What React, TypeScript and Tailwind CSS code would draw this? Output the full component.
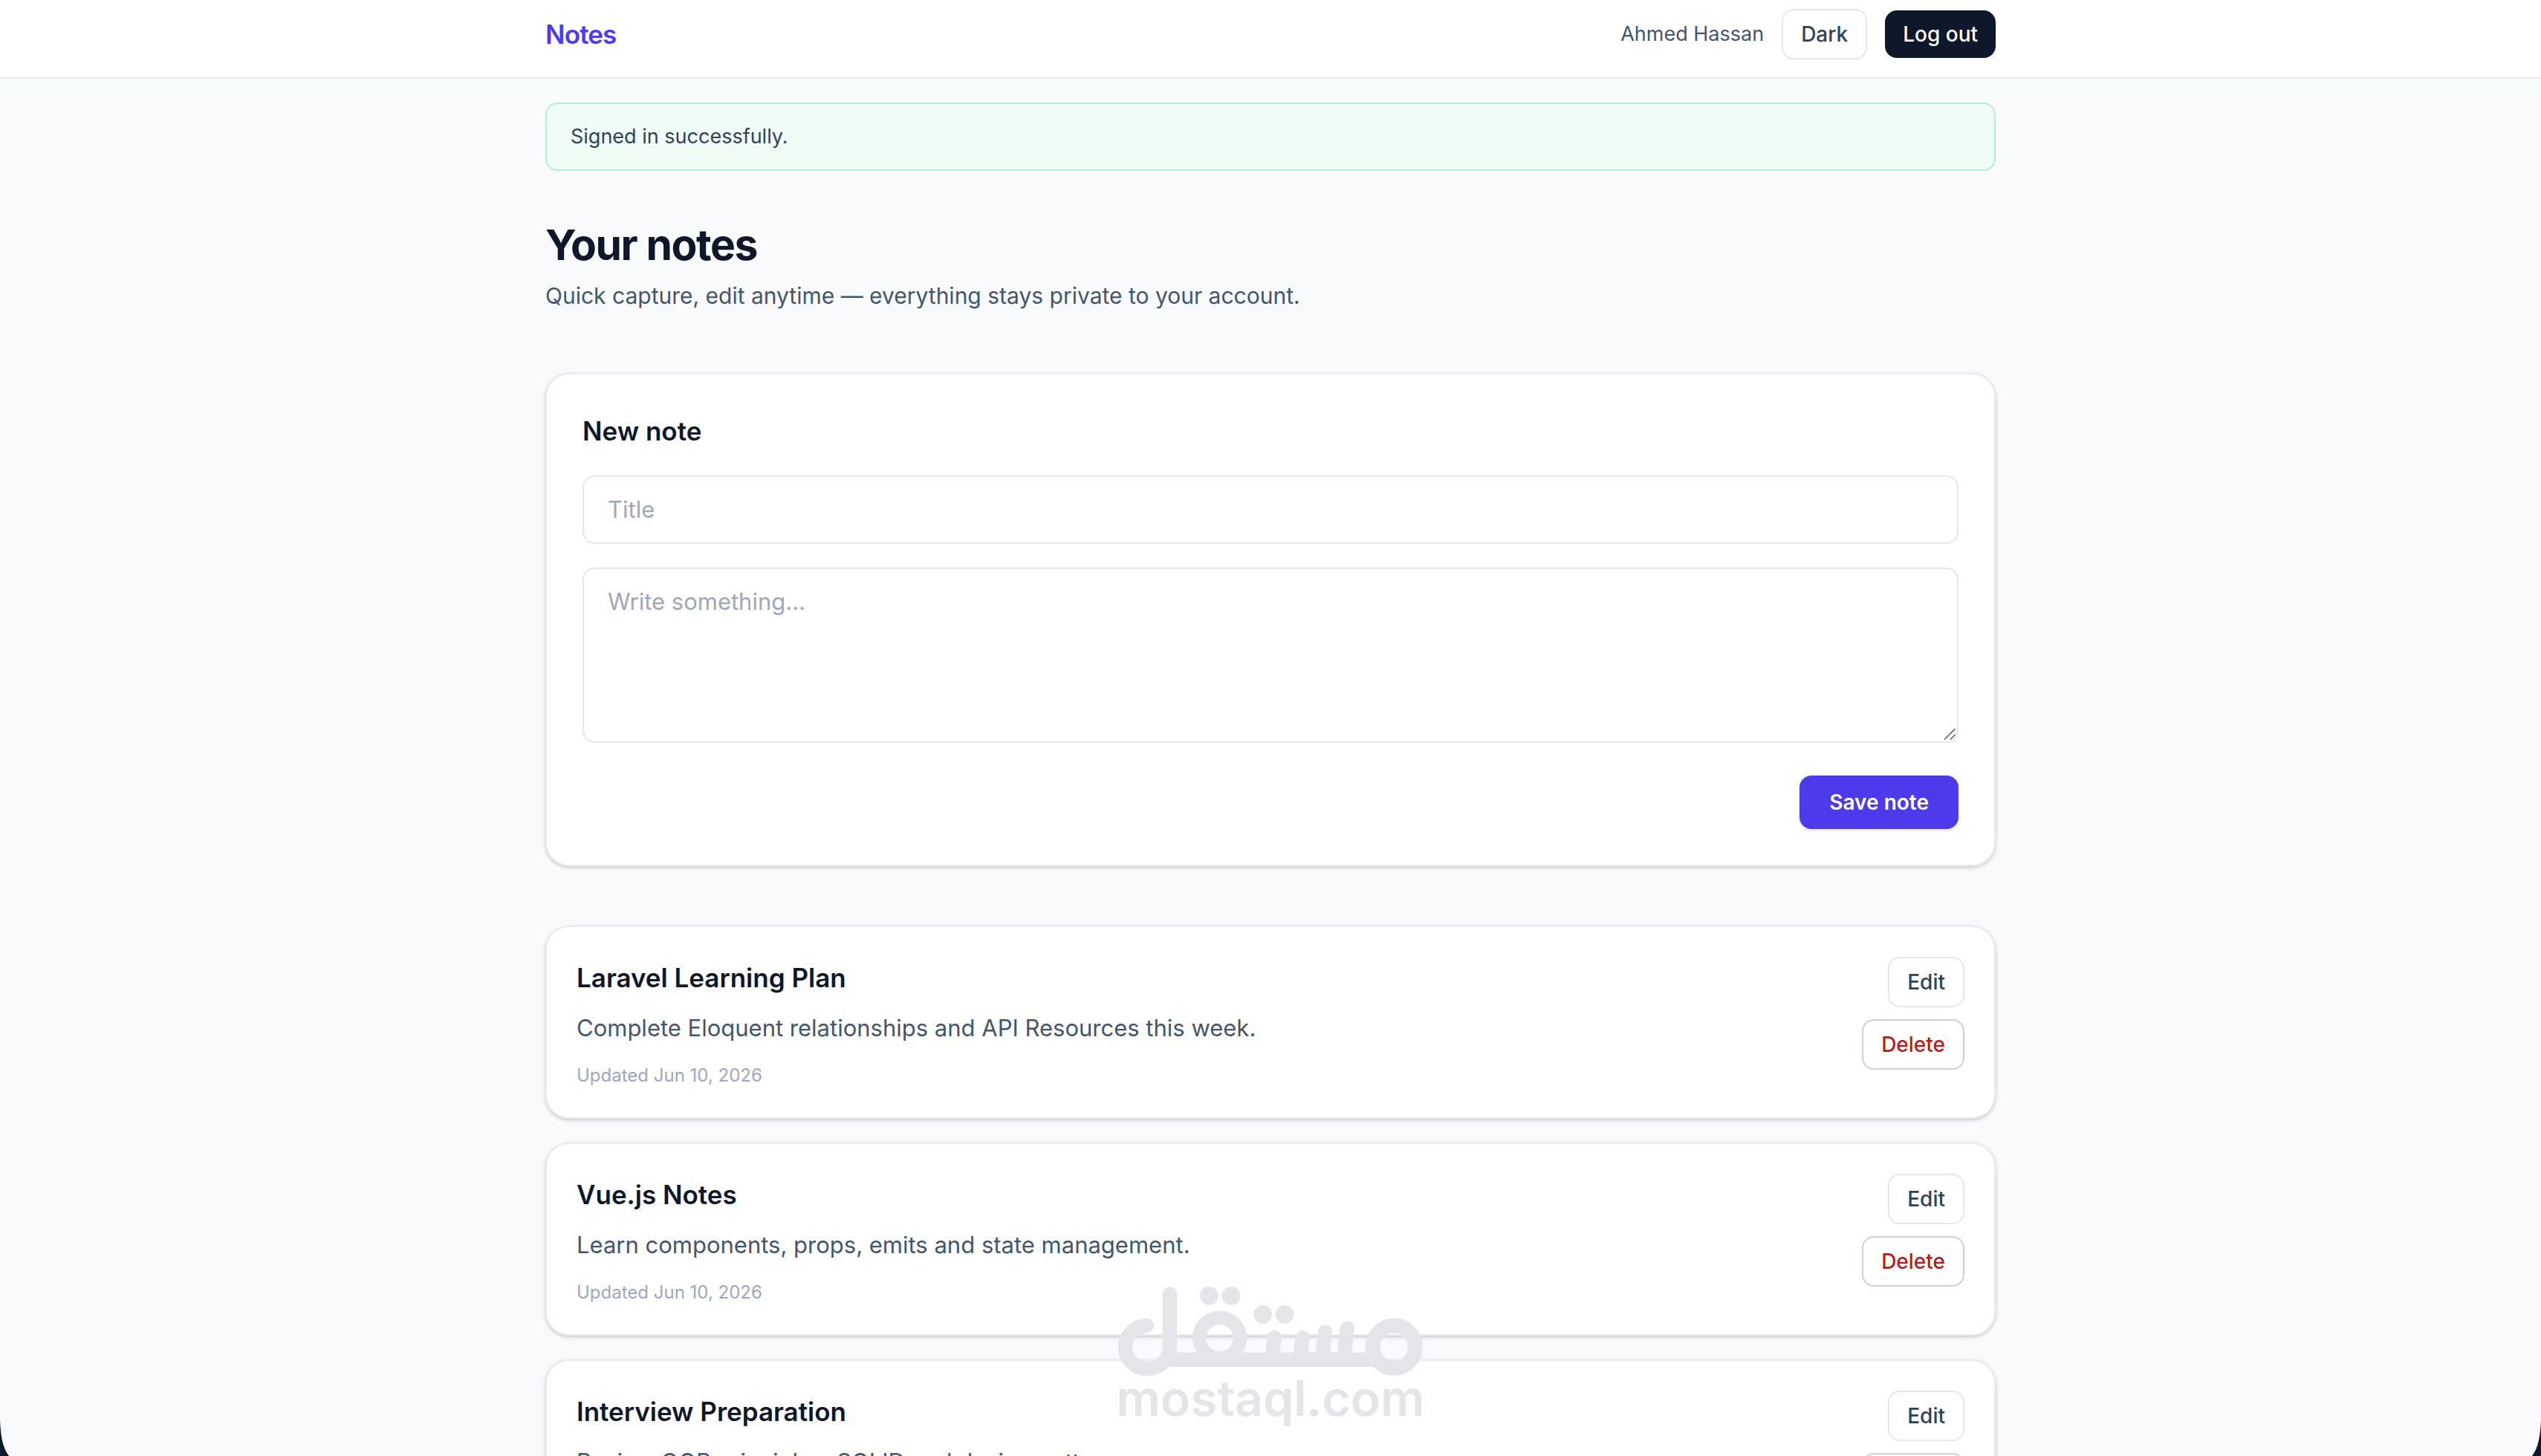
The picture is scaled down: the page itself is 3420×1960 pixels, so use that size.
import { FormEvent, useState } from 'react';

interface Note {
  id: number
  title: string
  body: string
  updated: string
}

const initialNotes: Note[] = [
  {
    id: 1,
    title: 'Laravel Learning Plan',
    body: 'Complete Eloquent relationships and API Resources this week.',
    updated: 'Jun 10, 2026',
  },
  {
    id: 2,
    title: 'Vue.js Notes',
    body: 'Learn components, props, emits and state management.',
    updated: 'Jun 10, 2026',
  },
  {
    id: 3,
    title: 'Interview Preparation',
    body: 'Review OOP principles, SOLID and design patterns.',
    updated: 'Jun 10, 2026',
  },
];

function Header() {
  return (
    <header className="border-b-2 border-[#e8edf2] bg-white pt-3 pb-6">
      <div className="mx-auto flex max-w-[2048px] items-center justify-between px-12">
        <a href="#" className="text-[35px] leading-[56px] font-semibold tracking-tight text-[#4f39f6]">
          Notes
        </a>
        <div className="flex items-center gap-6">
          <span className="text-[27px] leading-10 text-slate-600">Ahmed Hassan</span>
          <button
            type="button"
            className="rounded-2xl border-2 border-[#e4e7ee] px-6 py-3 text-[28px] leading-10 font-medium text-slate-700"
          >
            Dark
          </button>
          <button
            type="button"
            className="rounded-2xl bg-[#0f172a] px-6 py-3 text-[28px] leading-10 font-medium text-white"
          >
            Log out
          </button>
        </div>
      </div>
    </header>
  );
}

function NewNote({ onSave }: { onSave: (title: string, body: string) => void }) {
  const [title, setTitle] = useState('');
  const [body, setBody] = useState('');

  const onSubmit = (e: FormEvent) => {
    e.preventDefault();
    if (!title) return;
    onSave(title, body);
    setTitle('');
    setBody('');
  };

  return (
    <form
      onSubmit={onSubmit}
      className="mt-20 flex flex-col rounded-[32px] border-2 border-[#e8ebf2] bg-white p-12 shadow-[0_2px_6px_rgba(0,0,0,0.1),0_2px_4px_rgba(0,0,0,0.1)]"
    >
      <h2 className="text-[35px] leading-[56px] font-semibold text-[#0f172a]">New note</h2>
      <input
        type="text"
        aria-label="Title"
        value={title}
        onChange={(e) => setTitle(e.target.value)}
        placeholder="Title"
        className="mt-8 w-full rounded-2xl border-2 border-[#e4e7ee] bg-white px-8 py-5 text-[31px] leading-[48px] text-[#0f172a] placeholder:text-[#a0a6bd]"
      />
      <div className="relative mt-8 flex">
        <textarea
          rows={4}
          aria-label="Note"
          value={body}
          onChange={(e) => setBody(e.target.value)}
          placeholder="Write something..."
          className="w-full resize-none rounded-2xl border-2 border-[#e4e7ee] bg-white px-8 py-5 text-[31px] leading-[48px] text-[#0f172a] placeholder:text-[#a0a6bd]"
        />
        <svg
          className="absolute right-1 bottom-1 h-4 w-4"
          viewBox="0 0 16 16"
          fill="none"
          stroke="#5b6472"
          strokeWidth="1.6"
          aria-hidden="true"
        >
          <path d="M1 15.5 15.5 1M9 15.5 15.5 9" />
        </svg>
      </div>
      <button
        type="submit"
        className="mt-11 self-end rounded-2xl bg-[#4c3aeb] px-10 py-4 text-[28px] leading-10 font-semibold text-white shadow-[0_2px_4px_rgba(0,0,0,0.12)]"
      >
        Save note
      </button>
    </form>
  );
}

function NoteCard({ note, onDelete }: { note: Note, onDelete: () => void }) {
  return (
    <li className="flex items-start justify-between rounded-[32px] border-2 border-[#e8ebf2] bg-white p-10 shadow-[0_2px_6px_rgba(0,0,0,0.1),0_2px_4px_rgba(0,0,0,0.1)]">
      <div>
        <h3 className="text-[35px] leading-[56px] font-semibold text-[#0f172a]">{note.title}</h3>
        <p className="mt-4 text-[31px] leading-[48px] text-slate-600">{note.body}</p>
        <p className="mt-6 text-[24px] leading-8 text-[#a0a6bd]">
          Updated
          {' '}
          {note.updated}
        </p>
      </div>
      <div className="flex flex-col items-end gap-4">
        <button
          type="button"
          className="rounded-2xl border-2 border-[#e4e7ee] px-6 py-3 text-[28px] leading-10 font-medium text-slate-700"
        >
          Edit
        </button>
        <button
          type="button"
          onClick={onDelete}
          className="rounded-2xl border-2 border-[#d5ccd5] px-6 py-3 text-[28px] leading-10 font-medium text-[#b91c1c]"
        >
          Delete
        </button>
      </div>
    </li>
  );
}

function Watermark() {
  return (
    <div className="pointer-events-none absolute inset-x-0 bottom-12 flex flex-col items-center text-[#e4e5e9]">
      <svg
        className="h-[120px] w-[410px]"
        viewBox="135 97 1228 359"
        fill="none"
        stroke="currentColor"
        strokeWidth="58"
        strokeLinecap="round"
        aria-hidden="true"
      >
        <path d="M250 254A90 87 0 1 0 343 340V126" />
        <path d="M310 391H1180" strokeLinecap="butt" />
        <circle cx="544" cy="304" r="82" strokeWidth="55" />
        <circle cx="1247" cy="340" r="86" strokeWidth="60" />
        <path d="M765 302 754 391M879 302 868 391M969 280 957 391M1058 266 1044 391" />
        <g fill="currentColor" stroke="none">
          <circle cx="502" cy="134" r="37" />
          <circle cx="590" cy="134" r="37" />
          <circle cx="718" cy="209" r="37" />
          <circle cx="806" cy="209" r="37" />
        </g>
      </svg>
      <span className="text-[66px] leading-[60px] font-semibold">mostaql.com</span>
    </div>
  );
}

function App() {
  const [notes, setNotes] = useState(initialNotes);

  const addNote = (title: string, body: string) => {
    setNotes([{
      id: Date.now(), title, body, updated: 'just now',
    }, ...notes]);
  };

  return (
    <div className="relative h-screen overflow-hidden bg-[#f9fafc] font-['Inter',sans-serif]">
      <Header />
      <main className="mx-auto max-w-[2048px] px-12 pt-8">
        <div
          role="status"
          className="rounded-2xl border-2 border-[#b3f0d2] bg-[#effdf6] px-8 py-6 text-[27px] leading-10 text-slate-700"
        >
          Signed in successfully.
        </div>
        <h1 className="mt-16 text-[57px] leading-[72px] font-bold tracking-tight text-[#0f172a]">Your notes</h1>
        <p className="mt-2 text-[30px] leading-[48px] text-slate-600">
          Quick capture, edit anytime — everything stays private to your account.
        </p>
        <NewNote onSave={addNote} />
        <ul className="mt-20 flex flex-col gap-8">
          {notes.map((note) => (
            <NoteCard
              key={note.id}
              note={note}
              onDelete={() => setNotes(notes.filter((n) => n.id !== note.id))}
            />
          ))}
        </ul>
      </main>
      <Watermark />
      {/* rounded window corners */}
      <svg className="absolute bottom-0 left-0 h-12 w-3" viewBox="0 0 12 48" fill="#0f172a" aria-hidden="true">
        <path d="M0 0C1 20 3 36 12 48H0Z" />
      </svg>
      <svg className="absolute right-0 bottom-0 h-12 w-3" viewBox="0 0 12 48" fill="#0f172a" aria-hidden="true">
        <path d="M12 0C11 20 9 36 0 48H12Z" />
      </svg>
    </div>
  );
}

export default App;
